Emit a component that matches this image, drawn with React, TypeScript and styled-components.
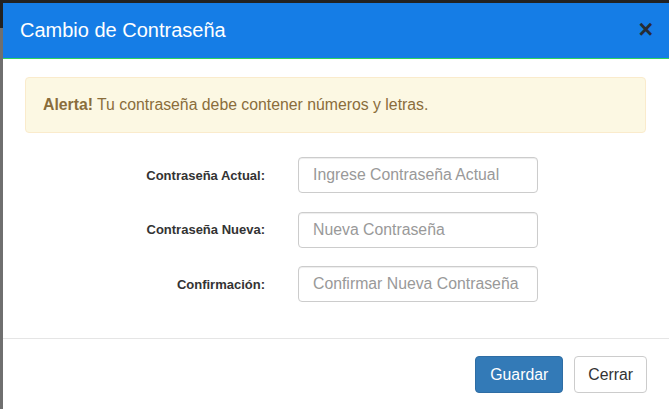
import React from "react";
import styled, { createGlobalStyle } from "styled-components";

const GlobalStyle = createGlobalStyle`
  * { box-sizing: border-box; }
  html, body { margin: 0; padding: 0; }
  body {
    font-family: "Liberation Sans", Arial, Helvetica, sans-serif;
    background: #fff;
    width: 669px;
    height: 409px;
    overflow: hidden;
  }
`;

const Backdrop = styled.div`
  width: 669px;
  height: 409px;
  padding: 3px 0 0 3px;
  background: linear-gradient(to bottom, #222 0, #222 28px, #6f6f6f 28px, #6f6f6f 100%);
  display: flex;
  overflow: hidden;
`;

const Modal = styled.div`
  flex: 1;
  background: #fff;
  display: flex;
  flex-direction: column;
`;

const Header = styled.div`
  height: 56px;
  background: #157de6;
  border-bottom: 1px solid #2fd35f;
  display: flex;
  align-items: center;
  justify-content: space-between;
  padding: 0 16px 2px 17px;
`;

const Title = styled.h4`
  margin: 0;
  font-size: 20px;
  font-weight: normal;
  color: #fff;
  line-height: 24px;
`;

const Close = styled.button`
  border: 0;
  background: transparent;
  padding: 0;
  font-family: "Liberation Sans", Arial, sans-serif;
  font-size: 25px;
  font-weight: bold;
  line-height: 1;
  color: #262c33;
  cursor: pointer;
  margin-top: -1px;
`;

const Body = styled.div`
  padding: 18px 23px 36px 22px;
`;

const Alert = styled.div`
  height: 56px;
  background: #fcf8e3;
  border: 1px solid #faebcc;
  border-radius: 4px;
  color: #8a6d3b;
  font-size: 15.8px;
  display: flex;
  align-items: center;
  padding: 0 17px 1px;
`;

const Strong = styled.strong`
  font-weight: bold;
  margin-right: 4px;
`;

const Form = styled.form`
  margin-top: 24px;
  display: grid;
  grid-template-columns: 240px 240px;
  column-gap: 33px;
  row-gap: 18.5px;
  align-items: center;
`;

const Label = styled.label`
  text-align: right;
  font-size: 13px;
  font-weight: bold;
  color: #333;
`;

const Input = styled.input`
  height: 36px;
  width: 240px;
  border: 1px solid #ccc;
  border-radius: 4px;
  padding: 0 14px;
  font-family: "Liberation Sans", Arial, sans-serif;
  font-size: 15.8px;
  color: #555;
  box-shadow: inset 0 1px 1px rgba(0, 0, 0, 0.075);
  &::placeholder { color: #999; }
`;

const Footer = styled.div`
  border-top: 1px solid #e5e5e5;
  padding: 17px 22px 16px;
  display: flex;
  justify-content: flex-end;
  gap: 11px;
`;

const Button = styled.button<{ $primary?: boolean }>`
  height: 37px;
  padding: 0 ${(p) => (p.$primary ? "14px" : "13px")};
  border-radius: 4px;
  font-family: "Liberation Sans", Arial, sans-serif;
  font-size: 15.8px;
  border: 1px solid ${(p) => (p.$primary ? "#2e6da4" : "#ccc")};
  background: ${(p) => (p.$primary ? "#337ab7" : "#fff")};
  color: ${(p) => (p.$primary ? "#fff" : "#333")};
  cursor: pointer;
`;

const fields = [
  { label: "Contraseña Actual:", placeholder: "Ingrese Contraseña Actual" },
  { label: "Contraseña Nueva:", placeholder: "Nueva Contraseña" },
  { label: "Confirmación:", placeholder: "Confirmar Nueva Contraseña" },
];

export default function App() {
  return (
    <>
      <GlobalStyle />
      <Backdrop>
        <Modal>
          <Header>
            <Title>Cambio de Contraseña</Title>
            <Close type="button" aria-label="Cerrar">×</Close>
          </Header>
          <Body>
            <Alert>
              <Strong>Alerta!</Strong> Tu contraseña debe contener números y letras.
            </Alert>
            <Form onSubmit={(e) => e.preventDefault()}>
              {fields.map((f) => (
                <React.Fragment key={f.label}>
                  <Label>{f.label}</Label>
                  <Input type="password" placeholder={f.placeholder} />
                </React.Fragment>
              ))}
            </Form>
          </Body>
          <Footer>
            <Button $primary type="button">Guardar</Button>
            <Button type="button">Cerrar</Button>
          </Footer>
        </Modal>
      </Backdrop>
    </>
  );
}
